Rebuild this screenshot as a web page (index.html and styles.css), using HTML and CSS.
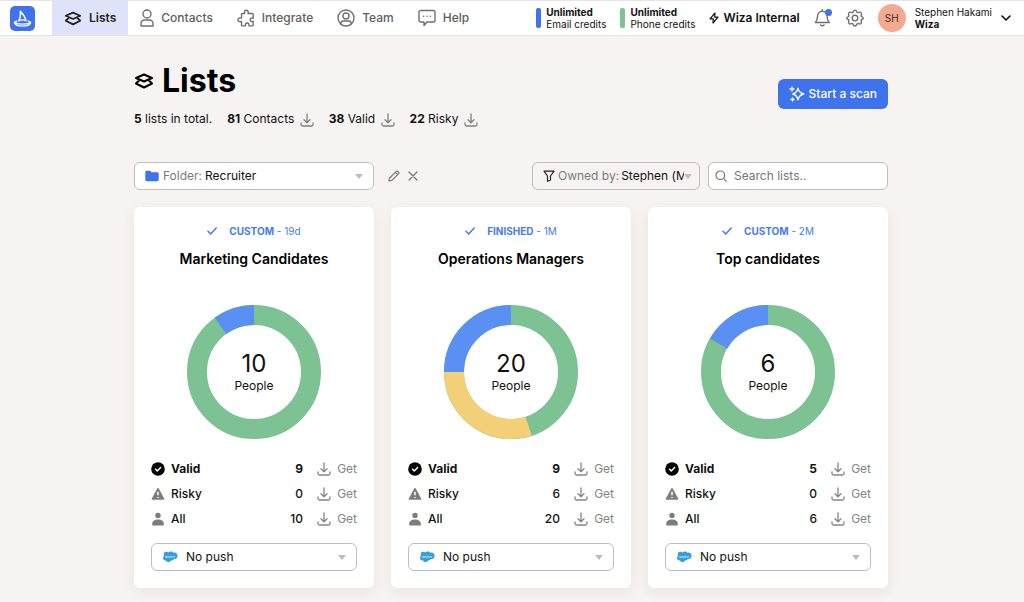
FILE: index.html
```
<!DOCTYPE html>
<html lang="en">
  <head>
    <meta charset="UTF-8" />
    <meta name="viewport" content="width=device-width, initial-scale=1.0" />
    <title>Lists - Wiza</title>
    <link rel="stylesheet" href="styles.css">
  </head>
  <body>
    <!-- Shared icons -->
    <svg class="sprite" aria-hidden="true">
      <symbol id="i-layers" viewBox="0 0 20 16">
        <path d="M10 1.500 18 5l-8 3.500L2 5z M5.500 7 2 10.500l8 4 8-4L14.500 7" fill="none" stroke="currentColor" stroke-width="2" stroke-linejoin="round" />
      </symbol>
      <symbol id="i-download" viewBox="0 0 14 14">
        <path d="M7 1v8.500M4 6.800l3 3 3-3M1 9.800v1.700A1.500 1.500 0 0 0 2.500 13h9a1.500 1.500 0 0 0 1.500-1.500V9.800" fill="none" stroke="currentColor" stroke-width="1.300" stroke-linecap="round" stroke-linejoin="round" />
      </symbol>
      <symbol id="i-check" viewBox="0 0 10 8">
        <path d="M1 4.200 3.700 7 9.200 1" fill="none" stroke="currentColor" stroke-width="1.500" stroke-linecap="round" stroke-linejoin="round" />
      </symbol>
      <symbol id="i-valid" viewBox="0 0 14 14">
        <circle cx="7" cy="7" r="6.800" fill="#000" />
        <path d="M4.500 7.200 6.300 8.900 9.600 5.500" fill="none" stroke="#fff" stroke-width="1.500" stroke-linecap="round" stroke-linejoin="round" />
      </symbol>
      <symbol id="i-risky" viewBox="0 0 14 14">
        <path d="M7 1.500 12.700 12H1.300z" fill="#7d7d7d" stroke="#7d7d7d" stroke-width="1.400" stroke-linejoin="round" />
        <path d="M7 4.800v3.400M7 10v1" fill="none" stroke="#fff" stroke-width="1.500" />
      </symbol>
      <symbol id="i-person" viewBox="0 0 14 14">
        <circle cx="7" cy="3.400" r="2.700" fill="#7d7d7d" />
        <path d="M1.200 13.500v-1.500C1.200 9.200 3.500 7.600 7 7.600s5.800 1.600 5.800 4.400v1.500z" fill="#7d7d7d" />
      </symbol>
      <symbol id="i-salesforce" viewBox="0 0 16 12">
        <path d="M6.600 1.500C7.300.8 8.100.5 8.900.6c1 0 1.800.5 2.300 1.200 2.300-.9 4.400.7 4.400 3 0 2.100-1.700 3.600-3.700 3.300-.5 1-1.600 1.600-2.700 1.200-.5 1.200-1.500 1.900-2.700 1.800-1.200 0-2-.8-2.400-1.700C2.300 9.700 1 8.600 1 7.100c0-.9.400-1.600 1-2C1.100 2.800 2 .7 4.200.7c1 0 1.900.3 2.400.8z" fill="#359fdb" />
      </symbol>
    </svg>

    <header class="topbar">
      <a href="#" class="logo" aria-label="Wiza">
        <svg viewBox="0 0 25 25" width="25" height="25">
          <rect width="25" height="25" rx="5" fill="#3f73ee" />
          <path d="M10.300 5.200c2.800 2.700 4.900 5.800 5.800 9.500M10.300 5.200c.6 3.500 0 6.700-1.600 9.600 2.600-1.200 5-1.300 7.400-.1M6.800 15.200c-2 .5-2.600 1.100-2.300 1.800.8 1.900 3.900 3.100 8 3.100s7.200-1.200 8-3.100c.3-.7-.5-1.300-2.300-1.800M4.700 16.800c4.500 1.500 11 1.500 15.600 0" fill="none" stroke="#fff" stroke-width="1.400" stroke-linecap="round" stroke-linejoin="round" />
        </svg>
      </a>
      <nav class="nav">
        <a href="#" class="nav-item active">
          <svg width="18" height="15"><use href="#i-layers" /></svg>Lists
        </a>
        <a href="#" class="nav-item">
          <svg viewBox="0 0 14 18" width="14" height="18" class="line">
            <circle cx="7" cy="5" r="4" />
            <path d="M1 17v-2.500A3.500 3.500 0 0 1 4.500 11h5a3.500 3.500 0 0 1 3.500 3.500V17z" />
          </svg>Contacts
        </a>
        <a href="#" class="nav-item">
          <svg viewBox="0 0 18 18" width="18" height="18" class="line">
            <path d="M5.500 4.500h2.200C7 2.700 7.800 1.200 9.300 1.200s2.400 1.500 1.700 3.300h4.200q1 0 1 1v3.700c-1.700-.8-3.100 0-3.100 1.500s1.400 2.300 3.100 1.600v3.600q0 1-1 1h-3.300c.5-1.700-.3-2.900-1.700-2.900s-2.200 1.200-1.700 2.900H5.500q-1 0-1-1v-3.600c-2 .7-3.600 0-3.600-1.600s1.600-2.300 3.600-1.500V5.500q0-1 1-1z" />
          </svg>Integrate
        </a>
        <a href="#" class="nav-item">
          <svg viewBox="0 0 18 18" width="18" height="18" class="line">
            <circle cx="9" cy="9" r="8" />
            <circle cx="9" cy="7" r="3" />
            <path d="M3.800 15v-.5c0-1.600 1.200-2.500 2.700-2.500h5c1.500 0 2.700.9 2.700 2.500v.5" />
          </svg>Team
        </a>
        <a href="#" class="nav-item">
          <svg viewBox="0 0 18 18" width="18" height="18" class="line">
            <path d="M2.500 1.500h13a1.500 1.500 0 0 1 1.500 1.500v8.500a1.500 1.500 0 0 1-1.500 1.500H9l-3 3.500V13H2.500A1.500 1.500 0 0 1 1 11.500V3a1.500 1.500 0 0 1 1.500-1.500z" />
            <path d="M5.500 7.200h.2M8.900 7.200h.2M12.300 7.200h.2" />
          </svg>Help
        </a>
      </nav>

      <div class="account">
        <div class="credits">
          <span class="bar blue"></span>
          <p><strong>Unlimited</strong><br>Email credits</p>
        </div>
        <div class="credits">
          <span class="bar green"></span>
          <p><strong>Unlimited</strong><br>Phone credits</p>
        </div>
        <a href="#" class="workspace">
          <svg viewBox="0 0 10 12" width="10" height="12">
            <path d="M6 1 1 6.800h3.300L4 11l5-5.800H5.700z" fill="none" stroke="currentColor" stroke-width="1.200" stroke-linejoin="round" />
          </svg>Wiza Internal
        </a>
        <button class="icon-btn" aria-label="Notifications">
          <svg viewBox="0 0 18 18" width="18" height="18" class="line">
            <path d="M3.500 7.500C3.500 4.500 5.500 2.200 8.300 2.200s4.800 2.300 4.800 5.300c0 3.500.8 4.500 2.200 6H1.300c1.400-1.500 2.200-2.500 2.200-6zM6.500 15.800c.8 1.300 2.800 1.300 3.600 0M8.300 2V.8" />
            <circle cx="14.500" cy="3.500" r="3.500" class="dot" />
          </svg>
        </button>
        <button class="icon-btn" aria-label="Settings">
          <svg viewBox="0 0 18 18" width="18" height="18" class="line">
            <path d="M7.300 2.500C7.800.6 10.200.6 10.700 2.500c.3 1 1.300 1.400 2.200.9 1.700-.9 3.300.7 2.400 2.400-.5.900-.1 1.900.7 2.100 1.700.5 1.700 2 0 2.400-.9.300-1.200 1.200-.7 2.100.9 1.700-.7 3.200-2.400 2.300-.9-.5-1.900-.1-2.200.8-.5 1.900-2.900 1.900-3.400 0-.3-.9-1.300-1.300-2.200-.8-1.700.9-3.300-.6-2.400-2.300.5-.9.200-1.800-.7-2.100-1.700-.4-1.700-1.900 0-2.400.8-.2 1.200-1.200.7-2.100-.9-1.700.7-3.300 2.400-2.400.9.500 1.900.1 2.200-.9z" />
            <circle cx="9" cy="9.100" r="2.800" />
          </svg>
        </button>
        <button class="user">
          <span class="avatar">SH</span>
          <span class="user-name">Stephen Hakami<br><strong>Wiza</strong></span>
          <svg viewBox="0 0 10 6" width="10" height="6">
            <path d="M1 1l4 4 4-4" fill="none" stroke="#000" stroke-width="1.500" stroke-linecap="round" stroke-linejoin="round" />
          </svg>
        </button>
      </div>
    </header>

    <main class="container">
      <div class="page-head">
        <div>
          <h1>
            <svg width="20" height="16"><use href="#i-layers" /></svg>Lists
          </h1>
          <ul class="totals">
            <li><strong>5</strong> lists in total.</li>
            <li><strong>81</strong> Contacts <button aria-label="Download contacts"><svg width="14" height="14"><use href="#i-download" /></svg></button></li>
            <li><strong>38</strong> Valid <button aria-label="Download valid"><svg width="14" height="14"><use href="#i-download" /></svg></button></li>
            <li><strong>22</strong> Risky <button aria-label="Download risky"><svg width="14" height="14"><use href="#i-download" /></svg></button></li>
          </ul>
        </div>
        <button class="scan-btn">
          <svg viewBox="0 0 16 16" width="16" height="16">
            <path d="M9 2.200c.7 3.500 1.900 4.900 5.800 5.800-3.900.9-5.100 2.300-5.800 5.800C8.300 10.300 7.100 8.900 3.800 8 7.100 7.100 8.300 5.700 9 2.200z M3 1v4M1 3h4M3.500 12v3M2 13.500h3" fill="none" stroke="#fff" stroke-width="1.300" stroke-linecap="round" stroke-linejoin="round" />
          </svg>Start a scan
        </button>
      </div>

      <div class="filters">
        <div class="field folder">
          <svg viewBox="0 0 14 12" width="14" height="12">
            <path d="M1.500.8h3.300q.5 0 .9.500l.7.900h6.100q1.200 0 1.200 1.200v6.400q0 1.400-1.200 1.400h-11Q.3 11.200.3 9.800V2Q.3.8 1.500.8z" fill="#3f73ee" />
          </svg>
          <label for="folder">Folder:</label>
          <select id="folder"><option>Recruiter</option></select>
        </div>
        <button class="tool" aria-label="Rename folder">
          <svg viewBox="0 0 12 12" width="12" height="12">
            <path d="M1 11l.6-3L8.300 1.300c.9-.9 3.300 1.300 2.300 2.400L4 10.400z M7.300 2.300l2.400 2.400" fill="none" stroke="currentColor" stroke-width="1.200" stroke-linejoin="round" />
          </svg>
        </button>
        <button class="tool" aria-label="Delete folder">
          <svg viewBox="0 0 10 10" width="10" height="10">
            <path d="M1 1l8 8M9 1 1 9" stroke="currentColor" stroke-width="1.300" stroke-linecap="round" />
          </svg>
        </button>
        <div class="field owner">
          <svg viewBox="0 0 12 12" width="12" height="12">
            <path d="M1 1.200h10L7.500 6v4l-3 1.200V6z" fill="none" stroke="#222" stroke-width="1.200" stroke-linejoin="round" />
          </svg>
          <label for="owner">Owned by:</label>
          <select id="owner"><option>Stephen (Me)</option></select>
        </div>
        <div class="field search">
          <svg viewBox="0 0 12 12" width="12" height="12">
            <path d="M8.700 8.700 11 11" stroke="#777" stroke-width="1.200" stroke-linecap="round" />
            <circle cx="5.300" cy="5.300" r="4.300" fill="none" stroke="#777" stroke-width="1.200" />
          </svg>
          <input type="text" placeholder="Search lists.." aria-label="Search lists">
        </div>
      </div>

      <div class="cards">
        <section class="card">
          <p class="status"><svg width="10" height="8"><use href="#i-check" /></svg><span><strong>CUSTOM</strong> - 19d</span></p>
          <h2>Marketing Candidates</h2>
          <div class="donut">
            <svg viewBox="0 0 134 134" width="134" height="134">
              <circle class="valid" cx="67" cy="67" r="57" />
              <path class="rest" d="M33.500 20.890A57 57 0 0 1 67 10" />
            </svg>
            <p><span class="count">10</span>People</p>
          </div>
          <table class="stats">
            <tr class="bold">
              <th><svg width="14" height="14"><use href="#i-valid" /></svg>Valid</th>
              <td>9</td>
              <td><button class="get"><svg width="14" height="14"><use href="#i-download" /></svg>Get</button></td>
            </tr>
            <tr>
              <th><svg width="14" height="14"><use href="#i-risky" /></svg>Risky</th>
              <td>0</td>
              <td><button class="get"><svg width="14" height="14"><use href="#i-download" /></svg>Get</button></td>
            </tr>
            <tr>
              <th><svg width="14" height="14"><use href="#i-person" /></svg>All</th>
              <td>10</td>
              <td><button class="get"><svg width="14" height="14"><use href="#i-download" /></svg>Get</button></td>
            </tr>
          </table>
          <div class="field push">
            <svg width="16" height="12"><use href="#i-salesforce" /><text x="8" y="7">salesforce</text></svg>
            <select aria-label="Push Marketing Candidates"><option>No push</option></select>
          </div>
        </section>

        <section class="card">
          <p class="status"><svg width="10" height="8"><use href="#i-check" /></svg><span><strong>FINISHED</strong> - 1M</span></p>
          <h2>Operations Managers</h2>
          <div class="donut">
            <svg viewBox="0 0 134 134" width="134" height="134">
              <circle class="valid" cx="67" cy="67" r="57" />
              <path class="risky" d="M84.610 121.210A57 57 0 0 1 10 67" />
              <path class="rest" d="M10 67A57 57 0 0 1 67 10" />
            </svg>
            <p><span class="count">20</span>People</p>
          </div>
          <table class="stats">
            <tr class="bold">
              <th><svg width="14" height="14"><use href="#i-valid" /></svg>Valid</th>
              <td>9</td>
              <td><button class="get"><svg width="14" height="14"><use href="#i-download" /></svg>Get</button></td>
            </tr>
            <tr>
              <th><svg width="14" height="14"><use href="#i-risky" /></svg>Risky</th>
              <td>6</td>
              <td><button class="get"><svg width="14" height="14"><use href="#i-download" /></svg>Get</button></td>
            </tr>
            <tr>
              <th><svg width="14" height="14"><use href="#i-person" /></svg>All</th>
              <td>20</td>
              <td><button class="get"><svg width="14" height="14"><use href="#i-download" /></svg>Get</button></td>
            </tr>
          </table>
          <div class="field push">
            <svg width="16" height="12"><use href="#i-salesforce" /><text x="8" y="7">salesforce</text></svg>
            <select aria-label="Push Operations Managers"><option>No push</option></select>
          </div>
        </section>

        <section class="card">
          <p class="status"><svg width="10" height="8"><use href="#i-check" /></svg><span><strong>CUSTOM</strong> - 2M</span></p>
          <h2>Top candidates</h2>
          <div class="donut">
            <svg viewBox="0 0 134 134" width="134" height="134">
              <circle class="valid" cx="67" cy="67" r="57" />
              <path class="rest" d="M17.640 38.500A57 57 0 0 1 67 10" />
            </svg>
            <p><span class="count">6</span>People</p>
          </div>
          <table class="stats">
            <tr class="bold">
              <th><svg width="14" height="14"><use href="#i-valid" /></svg>Valid</th>
              <td>5</td>
              <td><button class="get"><svg width="14" height="14"><use href="#i-download" /></svg>Get</button></td>
            </tr>
            <tr>
              <th><svg width="14" height="14"><use href="#i-risky" /></svg>Risky</th>
              <td>0</td>
              <td><button class="get"><svg width="14" height="14"><use href="#i-download" /></svg>Get</button></td>
            </tr>
            <tr>
              <th><svg width="14" height="14"><use href="#i-person" /></svg>All</th>
              <td>6</td>
              <td><button class="get"><svg width="14" height="14"><use href="#i-download" /></svg>Get</button></td>
            </tr>
          </table>
          <div class="field push">
            <svg width="16" height="12"><use href="#i-salesforce" /><text x="8" y="7">salesforce</text></svg>
            <select aria-label="Push Top candidates"><option>No push</option></select>
          </div>
        </section>
      </div>
    </main>
  </body>
</html>
```
FILE: styles.css
```
* {
  box-sizing: border-box;
}

body {
  font-family: "Inter", sans-serif;
  font-size: 12px;
  line-height: 16px;
  margin: 0;
  background-color: #f7f3f2;
  color: #111;
}

h1,
h2,
p,
ul {
  margin: 0;
  padding: 0;
}

a {
  color: inherit;
  text-decoration: none;
}

button,
select,
input {
  font: inherit;
  color: inherit;
  background: none;
  border: 0;
  padding: 0;
  margin: 0;
}

button {
  cursor: pointer;
}

svg {
  flex: none;
  display: block;
}

.sprite {
  position: absolute;
  width: 0;
  height: 0;
}

.line {
  fill: none;
  stroke: #707070;
  stroke-width: 1.4;
  stroke-linejoin: round;
  stroke-linecap: round;
}

.line .dot {
  fill: #3f73ee;
  stroke: none;
}

/* Top bar */
.topbar {
  display: flex;
  align-items: center;
  justify-content: space-between;
  height: 36px;
  padding: 0 13px 0 10px;
  background-color: #fff;
  border-top: 1px solid #e6e4e4;
  border-bottom: 1px solid #e6e2e2;
}

.nav {
  display: flex;
  align-self: stretch;
  margin-left: 17px;
  margin-right: auto;
}

.nav-item {
  display: flex;
  align-items: center;
  gap: 7px;
  padding: 0 12px;
  color: #606060;
  font-weight: 500;
}

.nav-item.active {
  background-color: #e0e3fc;
  color: #222;
  font-weight: 600;
}

.account {
  display: flex;
  align-items: center;
  gap: 14px;
}

.credits {
  display: flex;
  align-items: center;
  gap: 5px;
  font-size: 10px;
  line-height: 12px;
}

.bar {
  width: 5px;
  height: 20px;
  border-radius: 2px;
}

.bar.blue {
  background-color: #3f73ee;
}

.bar.green {
  background-color: #7cc293;
}

.workspace {
  display: flex;
  align-items: center;
  gap: 4px;
  font-weight: 600;
}

.user {
  display: flex;
  align-items: center;
  gap: 9px;
  font-size: 10px;
  line-height: 12px;
  text-align: left;
}

.avatar {
  width: 28px;
  height: 28px;
  border-radius: 50%;
  background-color: #f4a990;
  color: #4b2f27;
  line-height: 28px;
  text-align: center;
}

/* Page */
.container {
  max-width: 756px;
  margin: 0 auto;
  padding: 24px 2px 14px 0;
}

.page-head {
  display: flex;
  justify-content: space-between;
  align-items: center;
}

h1 {
  display: flex;
  align-items: center;
  gap: 8px;
  font-size: 32px;
  line-height: 42px;
  color: #000;
}

.totals {
  display: flex;
  gap: 15px;
  margin-top: 9px;
  list-style: none;
}

.totals button {
  margin-left: 2px;
  color: #808080;
  vertical-align: middle;
}

.scan-btn {
  display: flex;
  align-items: center;
  gap: 4px;
  height: 30px;
  padding: 0 11px;
  border-radius: 6px;
  background-color: #3f73ee;
  color: #fff;
  font-weight: 500;
}

.filters {
  display: flex;
  align-items: center;
  margin: 35px 0 17px;
}

.field {
  display: flex;
  align-items: center;
  height: 28px;
  padding: 0 10px;
  border: 1px solid #bfbdbd;
  border-radius: 6px;
  background-color: #fff;
}

.field label {
  margin: 0 3px 0 4px;
  color: #7a7a7a;
  white-space: nowrap;
}

.field select {
  flex: 1;
  min-width: 0;
  appearance: none;
}

.field input {
  flex: 1;
  min-width: 0;
  outline: none;
}

.field input::placeholder {
  color: #757575;
}

.field::after {
  content: "";
  border: 4px solid transparent;
  border-top: 5px solid #bdbdbd;
  border-bottom: 0;
}

.folder {
  width: 240px;
}

.tool {
  margin-left: 8px;
  color: #777;
}

.folder + .tool {
  margin-left: 14px;
}

.owner {
  width: 168px;
  margin-left: auto;
  padding-right: 7px;
  background-color: transparent;
}

.owner label {
  margin: 0 2px 0 3px;
}

.owner select {
  overflow: hidden;
  text-overflow: clip;
}

.search {
  width: 180px;
  margin-left: 8px;
  padding: 0 6px;
  gap: 7px;
}

.search::after {
  display: none;
}

/* Cards */
.cards {
  display: grid;
  grid-template-columns: repeat(3, 1fr);
  gap: 17px;
}

.card {
  padding: 17px;
  border-radius: 6px;
  background-color: #fff;
  box-shadow: 0 4px 14px rgba(80, 40, 40, 0.07);
}

.status {
  display: flex;
  justify-content: center;
  align-items: center;
  gap: 12px;
  font-size: 10px;
  line-height: 14px;
  color: #4a7bed;
}

.card h2 {
  margin-top: 11px;
  font-size: 14px;
  line-height: 20px;
  font-weight: 600;
  text-align: center;
  color: #000;
}

.donut {
  display: grid;
  place-items: center;
  margin-top: 36px;
}

.donut > * {
  grid-area: 1 / 1;
}

.donut svg {
  fill: none;
  stroke-width: 20;
}

.donut .valid {
  stroke: #7cc293;
}

.donut .risky {
  stroke: #f3cf77;
}

.donut .rest {
  stroke: #5a90f4;
}

.donut p {
  text-align: center;
}

.count {
  display: block;
  font-size: 24px;
  line-height: 28px;
}

.stats {
  width: 100%;
  margin-top: 17px;
  border-collapse: collapse;
}

.stats th,
.stats td {
  height: 25px;
  padding: 0;
  font-weight: 500;
  text-align: right;
}

.stats th {
  display: flex;
  align-items: center;
  gap: 6px;
}

.stats .bold th,
.stats .bold td {
  font-weight: 700;
}

.stats td:last-child {
  width: 54px;
}

.get {
  display: flex;
  align-items: center;
  gap: 6px;
  margin-left: auto;
  color: #858585;
  font-weight: 400;
}

.push {
  height: 28px;
  margin-top: 12px;
}

.push select {
  margin-left: 8px;
}

.push text {
  fill: #fff;
  font-size: 2px;
  font-style: italic;
  text-anchor: middle;
}
```
